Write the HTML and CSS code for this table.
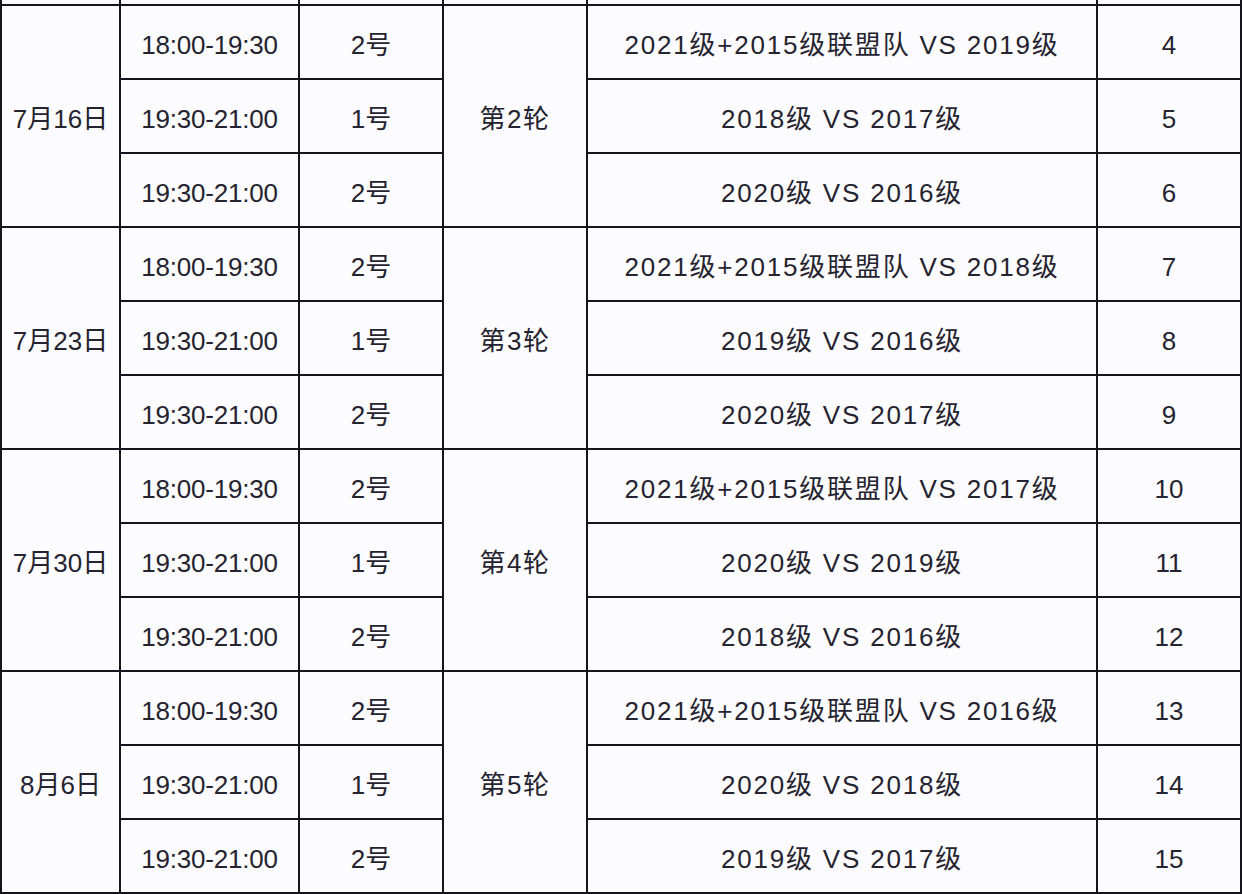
FILE: index.html
```html
<!DOCTYPE html>
<html lang="zh-CN">
<head>
<meta charset="utf-8">
<title>赛程表</title>
<link rel="stylesheet" href="styles.css">
</head>
<body>
<table class="schedule">
  <colgroup>
    <col class="c-date"><col class="c-time"><col class="c-field"><col class="c-round"><col class="c-match"><col class="c-no">
  </colgroup>
  <tbody>
    <tr class="stub"><td></td><td></td><td></td><td></td><td></td><td></td></tr>

    <tr><td rowspan="3" class="date">7月16日</td><td class="time">18:00-19:30</td><td>2号</td><td rowspan="3" class="round">第2轮</td><td class="match">2021级+2015级联盟队 VS 2019级</td><td>4</td></tr>
    <tr><td class="time">19:30-21:00</td><td>1号</td><td class="match">2018级 VS 2017级</td><td>5</td></tr>
    <tr><td class="time">19:30-21:00</td><td>2号</td><td class="match">2020级 VS 2016级</td><td>6</td></tr>

    <tr><td rowspan="3" class="date">7月23日</td><td class="time">18:00-19:30</td><td>2号</td><td rowspan="3" class="round">第3轮</td><td class="match">2021级+2015级联盟队 VS 2018级</td><td>7</td></tr>
    <tr><td class="time">19:30-21:00</td><td>1号</td><td class="match">2019级 VS 2016级</td><td>8</td></tr>
    <tr><td class="time">19:30-21:00</td><td>2号</td><td class="match">2020级 VS 2017级</td><td>9</td></tr>

    <tr><td rowspan="3" class="date">7月30日</td><td class="time">18:00-19:30</td><td>2号</td><td rowspan="3" class="round">第4轮</td><td class="match">2021级+2015级联盟队 VS 2017级</td><td>10</td></tr>
    <tr><td class="time">19:30-21:00</td><td>1号</td><td class="match">2020级 VS 2019级</td><td>11</td></tr>
    <tr><td class="time">19:30-21:00</td><td>2号</td><td class="match">2018级 VS 2016级</td><td>12</td></tr>

    <tr><td rowspan="3" class="date">8月6日</td><td class="time">18:00-19:30</td><td>2号</td><td rowspan="3" class="round">第5轮</td><td class="match">2021级+2015级联盟队 VS 2016级</td><td>13</td></tr>
    <tr><td class="time">19:30-21:00</td><td>1号</td><td class="match">2020级 VS 2018级</td><td>14</td></tr>
    <tr><td class="time">19:30-21:00</td><td>2号</td><td class="match">2019级 VS 2017级</td><td>15</td></tr>
  </tbody>
</table>
</body>
</html>
```

FILE: styles.css
```css
html, body {
  margin: 0;
  padding: 0;
  background: #fcfcfe;
}

body {
  width: 1242px;
  height: 894px;
  overflow: hidden;
  font-family: "Liberation Sans", "Noto Sans CJK SC", sans-serif;
  color: #25232f;
}

.schedule {
  border-collapse: separate;
  border-spacing: 0;
  table-layout: fixed;
  width: 1242px;
  border-left: 2px solid #15141c;
}

.c-date  { width: 119px; }
.c-time  { width: 179px; }
.c-field { width: 144px; }
.c-round { width: 144px; }
.c-match { width: 510px; }
.c-no    { width: 144px; }

.schedule td {
  box-sizing: border-box;
  height: 74px;
  padding: 5px 0 0 0;
  border-right: 2px solid #15141c;
  border-bottom: 2px solid #15141c;
  text-align: center;
  vertical-align: middle;
  font-size: 26px;
  line-height: 30px;
  white-space: nowrap;
  background: #fcfcfe;
}

.schedule tr.stub td {
  height: 6px;
  padding: 0;
  font-size: 0;
  line-height: 0;
}

.schedule td.time {
  letter-spacing: -0.2px;
}

.schedule td.match {
  letter-spacing: 1.8px;
}

.schedule td.round {
  letter-spacing: 1.5px;
}

.schedule td.date {
  letter-spacing: 0;
}
```
